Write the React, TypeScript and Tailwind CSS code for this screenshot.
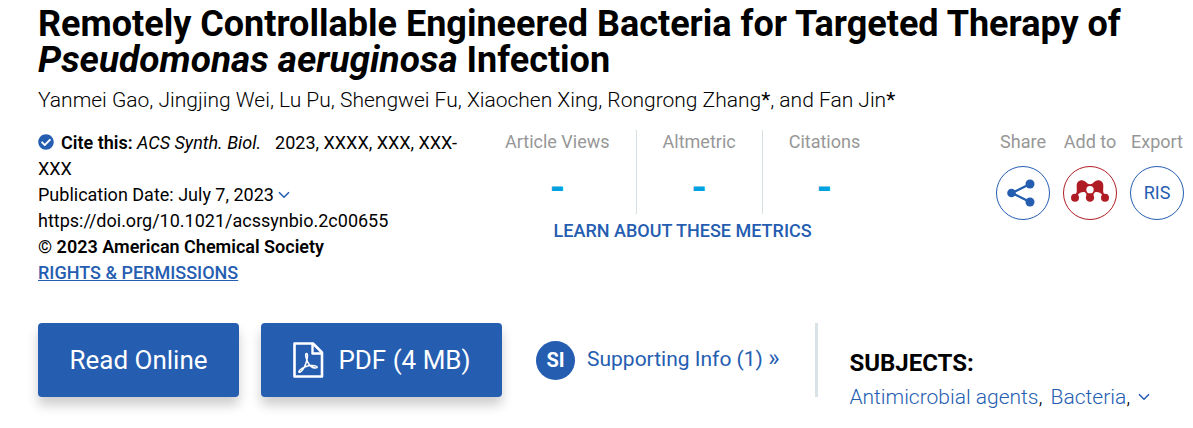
import { FaCheckCircle } from "react-icons/fa";

const AUTHORS = ["Yanmei Gao", "Jingjing Wei", "Lu Pu", "Shengwei Fu", "Xiaochen Xing"];

const METRICS = ["Article Views", "Altmetric", "Citations"];

function Chevron() {
  return (
    <svg viewBox="0 0 12 8" className="h-2 w-3" fill="none" stroke="currentColor" strokeWidth="1.6">
      <path d="M1 1.2 6 6.2 11 1.2" />
    </svg>
  );
}

function ShareIcon() {
  return (
    <svg viewBox="0 0 28 28" className="mr-1 size-7" fill="currentColor">
      <path d="M23 5 5 14 23 23" fill="none" stroke="currentColor" strokeWidth="2.4" />
      <circle cx="23" cy="5" r="4.5" />
      <circle cx="4.5" cy="14" r="4.3" />
      <circle cx="23" cy="23" r="4.5" />
    </svg>
  );
}

function MendeleyIcon() {
  return (
    <svg viewBox="0 0 114 66" className="mb-1 h-[22px] w-[38px]" fill="currentColor">
      <path d="M12 44C20 38 17 28 17 17C17 6 25 1 33 1C44 1 47 13 57 13C67 13 70 1 81 1C89 1 97 6 97 17C97 28 94 38 102 44L94 46C90 38 84 36 76 36C68 36 68 44 66 50H48C46 44 46 36 38 36C30 36 24 38 20 46Z" />
      <circle cx="12" cy="53" r="12" />
      <circle cx="57" cy="53" r="12.5" />
      <circle cx="102" cy="53" r="12" />
      <circle cx="57" cy="29" r="11" fill="#fff" />
    </svg>
  );
}

function PdfIcon() {
  return (
    <svg viewBox="0 0 32 37" className="h-[37px] w-8" fill="none" stroke="currentColor" strokeLinejoin="round">
      <path d="M2.5 1.5H21L30 10.5V34.5H2.5Z" strokeWidth="2.6" />
      <path d="M20.5 1.5V11.5H30" strokeWidth="2.4" />
      <path
        d="M14.6 11.5C12.8 11.5 14 16.5 15.6 19.8C17.6 23.8 21 26.4 24.4 25.8C27 25 23 22.8 17.6 23.6C12.4 24.4 7.4 27.6 6.8 29.6C6.6 31.4 9.6 30 12.2 25.4C14.6 21 16.8 11.6 14.6 11.5Z"
        strokeWidth="1.5"
      />
    </svg>
  );
}

function Action({ label, color, children }: { label: string; color: string; children: React.ReactNode }) {
  return (
    <div className="flex w-[54px] flex-col items-center gap-3 whitespace-nowrap">
      <span className="text-lg leading-6 text-[#979797]">{label}</span>
      <button
        type="button"
        aria-label={label}
        className={`flex size-[54px] items-center justify-center rounded-full border ${color}`}
      >
        {children}
      </button>
    </div>
  );
}

export default function App() {
  return (
    <main className="bg-white pt-1.5 pr-[9px] pb-3 pl-[38px] font-[Roboto,sans-serif] text-black">
      <h1 className="text-4xl leading-9 font-bold">
        Remotely Controllable Engineered Bacteria for Targeted Therapy of{" "}
        <i className="text-[37px]">Pseudomonas aeruginosa</i> Infection
      </h1>
      <p className="mt-2 text-[21px] leading-7 font-light">
        {AUTHORS.map((author) => (
          <span key={author}>{author}, </span>
        ))}
        Rongrong Zhang<span className="font-normal">*</span>, and Fan Jin<span className="font-normal">*</span>
      </p>

      <div className="mt-4 flex items-start">
        {/* Citation details */}
        <div className="w-[441px] text-lg leading-[26px]">
          <p>
            <FaCheckCircle className="mr-[7px] mb-1 inline size-4 text-[#255db1]" />
            <b className="font-semibold">Cite this:</b> <i>ACS Synth. Biol.</i>
            <span className="ml-3.5">2023, XXXX, XXX, XXX-XXX</span>
          </p>
          <p className="flex items-center gap-1">
            Publication Date: July 7, 2023
            <button type="button" aria-label="Show dates" className="text-[#255db1]">
              <Chevron />
            </button>
          </p>
          <p>https://doi.org/10.1021/acssynbio.2c00655</p>
          <p className="font-semibold">© 2023 American Chemical Society</p>
          <a href="#rights" className="font-medium text-[#255db1] underline">
            RIGHTS &amp; PERMISSIONS
          </a>
        </div>

        {/* Metrics */}
        <div className="flex flex-col items-center gap-[5px]">
          <div className="flex divide-x divide-[#d6dfe3]">
            {METRICS.map((metric) => (
              <div key={metric} className="flex h-[84px] flex-col items-center px-[26px]">
                <span className="text-lg leading-6 text-[#979797]">{metric}</span>
                <span className="mt-4 text-[40px] leading-9 font-bold text-[#00a3e0]">-</span>
              </div>
            ))}
          </div>
          <a href="#metrics" className="text-lg leading-6 font-medium text-[#255db1]">
            LEARN ABOUT THESE METRICS
          </a>
        </div>

        <div className="ml-auto flex gap-[13px]">
          <Action label="Share" color="border-[#255db1] text-[#255db1]">
            <ShareIcon />
          </Action>
          <Action label="Add to" color="border-[#b01c24] text-[#b01c24]">
            <MendeleyIcon />
          </Action>
          <Action label="Export" color="border-[#255db1] text-[#255db1]">
            <span className="text-lg">RIS</span>
          </Action>
        </div>
      </div>

      <div className="mt-[37px] flex items-start">
        <button
          type="button"
          className="h-[74px] w-[201px] rounded bg-[#255db1] text-[26px] text-white shadow-[0_8px_12px_rgba(0,0,0,0.2)]"
        >
          Read Online
        </button>
        <button
          type="button"
          className="ml-[22px] flex h-[74px] w-[241px] items-center justify-center gap-3.5 rounded bg-[#255db1] text-[26px] text-white shadow-[0_8px_12px_rgba(0,0,0,0.2)]"
        >
          <PdfIcon />
          PDF (4 MB)
        </button>
        <a href="#supporting" className="ml-[34px] flex h-[74px] items-center gap-3 text-[21px] text-[#255db1]">
          <span className="flex size-[39px] items-center justify-center rounded-full bg-[#255db1] text-xl font-bold text-white">
            SI
          </span>
          <span>
            Supporting Info (1) <span className="text-2xl leading-7">»</span>
          </span>
        </a>
        <div className="ml-9 h-[74px] w-[3px] bg-[#d9e2e6]" />
        <section className="ml-[31px] pt-6">
          <h2 className="text-2xl leading-8 font-bold">SUBJECTS:</h2>
          <p className="mt-1 flex items-center gap-2 text-[21px] leading-7 font-light">
            <span>
              <a href="#agents" className="text-[#255db1]">Antimicrobial agents</a>,
            </span>
            <span>
              <a href="#bacteria" className="text-[#255db1]">Bacteria</a>,
            </span>
            <button type="button" aria-label="Show more subjects" className="text-[#255db1]">
              <Chevron />
            </button>
          </p>
        </section>
      </div>
    </main>
  );
}
